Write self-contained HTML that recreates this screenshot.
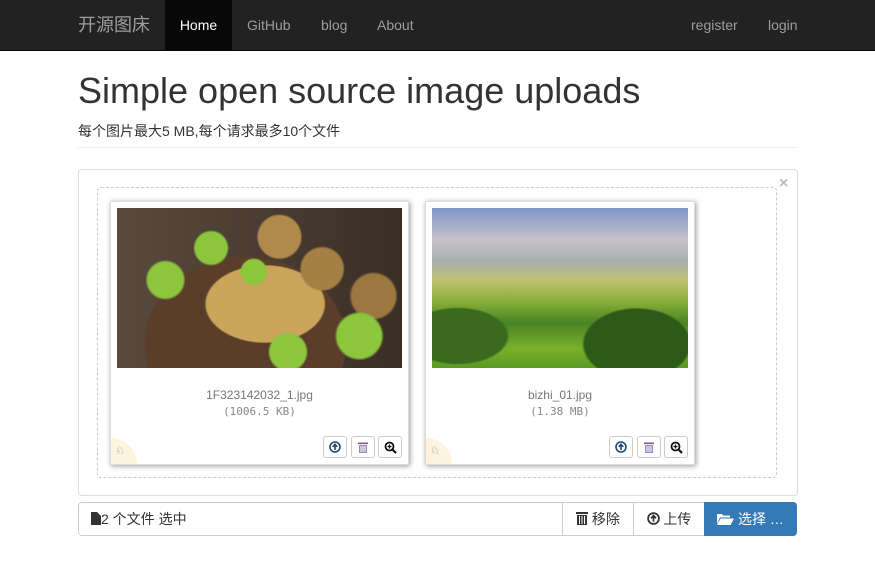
<!DOCTYPE html>
<html><head><meta charset="utf-8"><style>
*{box-sizing:border-box}
body{margin:0;width:875px;height:566px;font-family:"Liberation Sans","Noto Sans CJK SC",sans-serif;color:#333;background:#fff;font-size:14px;overflow:hidden;position:relative}
.nav{position:absolute;top:0;left:0;width:875px;height:51px;background:#222;border-bottom:1px solid #080808}
.nav span{position:absolute;top:0;line-height:50px;color:#9d9d9d;font-size:14px}
.brand{left:78px;font-size:18px!important}
.home{left:165px;width:67px;background:#080808;color:#fff!important;text-align:center}
h1{position:absolute;left:78px;top:70px;margin:0;font-size:36px;font-weight:normal;color:#333}
.sub{position:absolute;left:78px;top:121px;font-size:14px}
.hr{position:absolute;left:78px;top:147px;width:719px;border-top:1px solid #eee}
.box{position:absolute;left:78px;top:169px;width:720px;height:327px;border:1px solid #ddd;border-radius:4px}
.drop{position:absolute;left:97px;top:187px;width:680px;height:291px;border:1px dashed #ccc;border-radius:4px}
.x{position:absolute;left:779px;top:175px;color:#bbb;font-size:16px;font-weight:bold}
.card{position:absolute;top:201px;height:264px;border:1px solid #ddd;box-shadow:1px 1px 5px #999;background:#fff}
.img{position:absolute;top:6px;left:6px;height:160px}
.fn{position:absolute;width:100%;text-align:center;top:186px;font-size:11px;font-family:"DejaVu Sans Mono",monospace;color:#888}
.fn div:first-child{font-family:"Liberation Sans",sans-serif;font-size:12px;color:#777;margin-bottom:3px}
.b{position:absolute;top:234px;width:24px;height:22px;border:1px solid #ccc;border-radius:3px;display:flex;align-items:center;justify-content:center}
.drag{position:absolute;left:0;bottom:0;width:26px;height:26px;background:#fcf4dc;border-top-right-radius:26px;font-size:11px;color:#999;padding:6px 0 0 4px}
.bar{position:absolute;left:78px;top:502px;width:719px;height:34px;border:1px solid #ccc;border-radius:4px}
.bar span{position:absolute;top:0;line-height:32px;font-size:14px}
</style></head><body>
<div class="nav"><span class="brand">开源图床</span><span class="home">Home</span><span style="left:247px">GitHub</span><span style="left:321px">blog</span><span style="left:377px">About</span><span style="left:691px">register</span><span style="left:768px">login</span></div>
<h1>Simple open source image uploads</h1>
<div class="sub">每个图片最大5 MB,每个请求最多10个文件</div>
<div class="hr"></div>
<div class="box"></div>
<div class="drop"></div>
<div class="x">×</div>
<div class="card" style="left:110px;width:299px">
<div class="img" style="width:285px;background:
radial-gradient(circle at 17% 45%,#8cc63c 0 7%,transparent 8%),
radial-gradient(circle at 33% 25%,#8cc63c 0 7%,transparent 8%),
radial-gradient(circle at 48% 40%,#8cc63c 0 7%,transparent 8%),
radial-gradient(circle at 60% 90%,#8cc63c 0 8%,transparent 9%),
radial-gradient(circle at 85% 80%,#8cc63c 0 8%,transparent 9%),
radial-gradient(circle at 57% 18%,#b08a4a 0 10%,transparent 11%),
radial-gradient(circle at 72% 38%,#a58045 0 9%,transparent 10%),
radial-gradient(circle at 90% 55%,#9a7840 0 8%,transparent 9%),
radial-gradient(ellipse at 52% 60%,#c9a45a 0 28%,transparent 29%),
radial-gradient(ellipse at 45% 85%,#5a3e2a 0 45%,transparent 46%),
linear-gradient(90deg,#5a4a3e,#3a2e25)"></div>
<div class="fn"><div>1F323142032_1.jpg</div><div>(1006.5 KB)</div></div>
<div class="drag">♘</div>
<div class="b" style="left:212px"><svg width="12" height="12" viewBox="0 0 12 12"><circle cx="6" cy="6" r="5" fill="none" stroke="#1e4a70" stroke-width="1.6"/><path d="M6 9V3.5M3.7 5.8L6 3.3 8.3 5.8" stroke="#1e4a70" stroke-width="1.6" fill="none"/></svg></div>
<div class="b" style="left:240px"><svg width="12" height="13" viewBox="0 0 12 13"><rect x="1" y="1.5" width="10" height="1.6" fill="#8a5a7a"/><path d="M2 4h8v8H2z" fill="#9a8ac0"/><path d="M4 5v6M6 5v6M8 5v6" stroke="#fff"/></svg></div>
<div class="b" style="left:267px"><svg width="13" height="13" viewBox="0 0 13 13"><circle cx="5.5" cy="5.5" r="4" fill="none" stroke="#111" stroke-width="1.8"/><path d="M8.5 8.5L12 12" stroke="#111" stroke-width="2.2"/><path d="M5.5 3.5v4M3.5 5.5h4" stroke="#111" stroke-width="1.3"/></svg></div>
</div>
<div class="card" style="left:425px;width:270px">
<div class="img" style="width:256px;background:
radial-gradient(ellipse at 80% 85%,#2e5a18 0 18%,transparent 19%),
radial-gradient(ellipse at 10% 80%,#3a6a1e 0 15%,transparent 16%),
linear-gradient(#7f98c8 0%,#c8c2c8 20%,#a8b0b0 33%,#c0c070 45%,#8ab038 58%,#4a8424 72%,#78b22a 88%,#5a9a22 100%)"></div>
<div class="fn"><div>bizhi_01.jpg</div><div>(1.38 MB)</div></div>
<div class="drag">♘</div>
<div class="b" style="left:183px"><svg width="12" height="12" viewBox="0 0 12 12"><circle cx="6" cy="6" r="5" fill="none" stroke="#1e4a70" stroke-width="1.6"/><path d="M6 9V3.5M3.7 5.8L6 3.3 8.3 5.8" stroke="#1e4a70" stroke-width="1.6" fill="none"/></svg></div>
<div class="b" style="left:211px"><svg width="12" height="13" viewBox="0 0 12 13"><rect x="1" y="1.5" width="10" height="1.6" fill="#8a5a7a"/><path d="M2 4h8v8H2z" fill="#9a8ac0"/><path d="M4 5v6M6 5v6M8 5v6" stroke="#fff"/></svg></div>
<div class="b" style="left:238px"><svg width="13" height="13" viewBox="0 0 13 13"><circle cx="5.5" cy="5.5" r="4" fill="none" stroke="#111" stroke-width="1.8"/><path d="M8.5 8.5L12 12" stroke="#111" stroke-width="2.2"/><path d="M5.5 3.5v4M3.5 5.5h4" stroke="#111" stroke-width="1.3"/></svg></div>
</div>
<div class="bar">
<span style="left:12px"><svg width="10" height="13" viewBox="0 0 10 13" style="vertical-align:-1px"><path d="M0 0h6l4 4v9H0z" fill="#333"/></svg>2 个文件 选中</span>
<span style="left:483px;width:71px;height:32px;border-left:1px solid #ccc;text-align:center"><svg width="12" height="14" viewBox="0 0 12 14" style="vertical-align:-1px"><rect x="0" y="1" width="12" height="2" fill="#333"/><path d="M1 4h10v10H1z" fill="#333"/><path d="M3.5 5v8M6 5v8M8.5 5v8" stroke="#fff"/></svg> 移除</span>
<span style="left:554px;width:71px;height:32px;border-left:1px solid #ccc;text-align:center"><svg width="13" height="13" viewBox="0 0 12 12" style="vertical-align:-1px"><circle cx="6" cy="6" r="5" fill="none" stroke="#333" stroke-width="1.6"/><path d="M6 9V3.5M3.7 5.8L6 3.3 8.3 5.8" stroke="#333" stroke-width="1.6" fill="none"/></svg> 上传</span>
<span style="left:625px;width:93px;height:34px;top:-1px;line-height:34px;background:#337ab7;color:#fff;border-radius:0 4px 4px 0;text-align:center"><svg width="17" height="12" viewBox="0 0 17 12" style="vertical-align:-1px"><path d="M0 1h5l1 1.5h7v2H3L0 11z" fill="#fff"/><path d="M3.5 5.5H17L13.5 12H0z" fill="#fff"/></svg> 选择 …</span>
</div>
</body></html>
